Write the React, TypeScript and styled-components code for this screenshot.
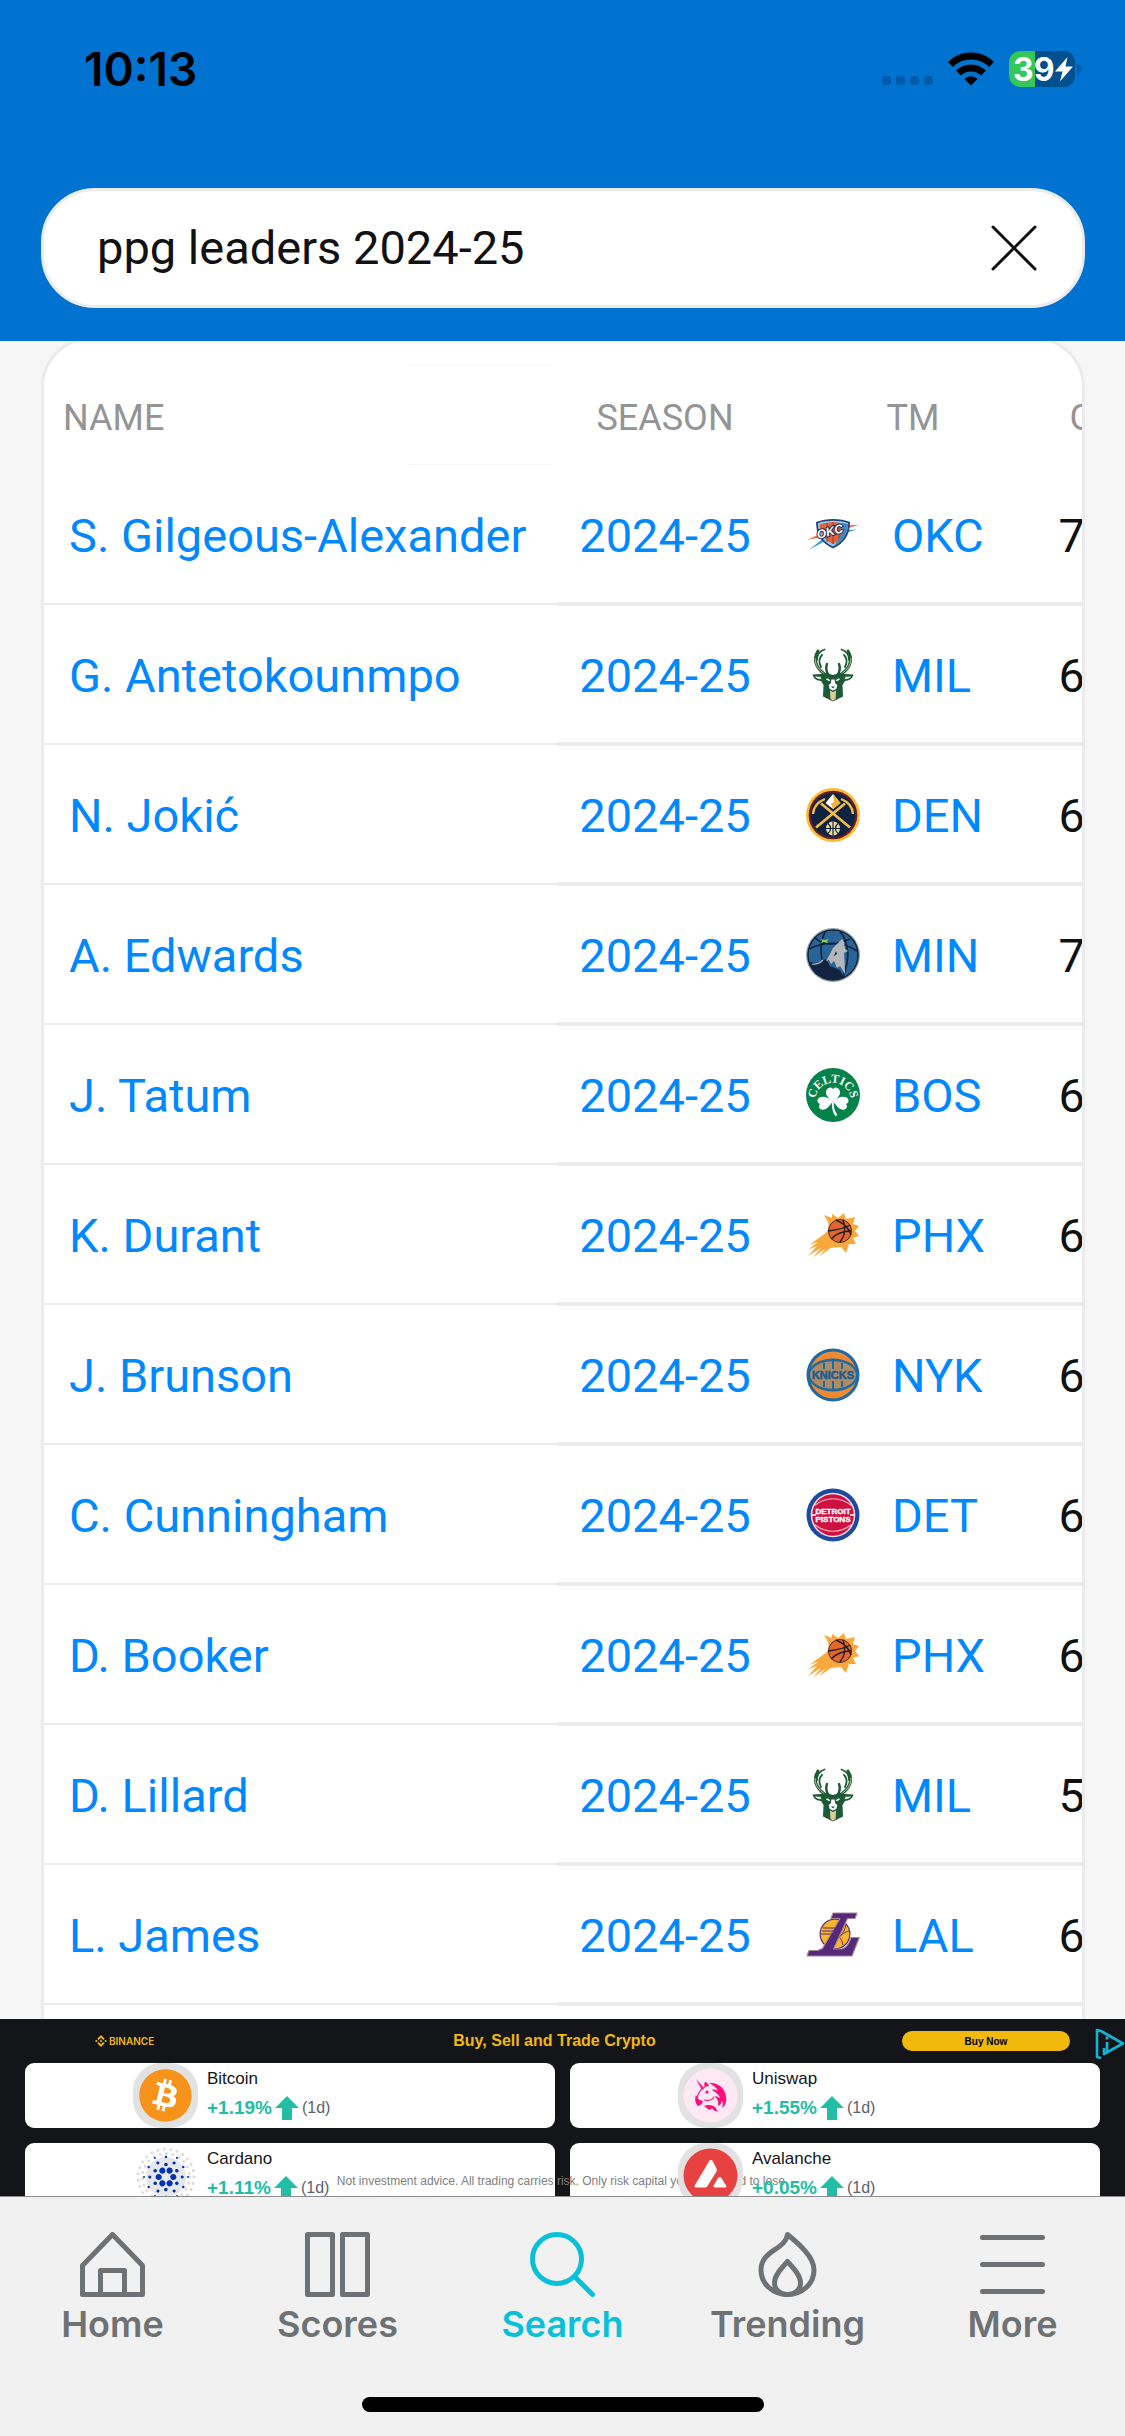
import React from "react";
import styled, { createGlobalStyle } from "styled-components";
import { FaBitcoin } from "react-icons/fa";
import { SiBinance, SiCardano } from "react-icons/si";

const color = {
  brand: "#0073d1",
  link: "#0088ff",
  line: "#ebebeb",
  canvas: "#f6f6f6",
  ink: "#111111",
  muted: "#949494",
  navGrey: "#6e7275",
  navActive: "#08c0d8",
  gold: "#f0b90b",
  up: "#22bda5",
};

const GlobalStyle = createGlobalStyle`
  *, *::before, *::after { box-sizing: border-box; }
  body { margin: 0; background: ${color.canvas}; }
  a { color: inherit; text-decoration: none; }
  button { border: 0; padding: 0; background: none; font: inherit; cursor: pointer; }
  svg { display: block; }
`;

const Screen = styled.div`
  height: 100vh;
  display: flex;
  flex-direction: column;
  overflow: hidden;
  font-family: Roboto, "Liberation Sans", sans-serif;
  color: ${color.ink};
`;

/* ---------- header ---------- */

const Header = styled.header`
  flex: none;
  display: flex;
  flex-direction: column;
  gap: 50px;
  padding-bottom: 33px;
  background: ${color.brand};
`;

const StatusBar = styled.div`
  display: flex;
  align-items: center;
  justify-content: space-between;
  height: 138px;
  padding: 0 43px 0 84px;
  color: #000;
  font-family: Inter, "Liberation Sans", sans-serif;
`;

const Clock = styled.time`
  font-size: 46px;
  font-weight: 600;
`;

const StatusIcons = styled.div`
  display: flex;
  align-items: center;
  gap: 15px;
`;

const SignalDots = styled.div`
  display: flex;
  gap: 5px;
  padding-top: 22px;
`;

const SignalDot = styled.span`
  width: 9px;
  height: 9px;
  border-radius: 3px;
  background: #005ca8;
`;

const SearchForm = styled.form`
  display: flex;
  align-items: center;
  height: 120px;
  margin: 0 40px 0 41px;
  padding: 0 45px 0 53px;
  border: 3px solid #ebebf0;
  border-radius: 54px;
  background: #fff;
`;

const SearchInput = styled.input`
  flex: 1;
  min-width: 0;
  padding: 0;
  border: 0;
  outline: 0;
  background: none;
  color: ${color.ink};
  font: 400 47px/60px Roboto, "Liberation Sans", sans-serif;
`;

/* ---------- results table ---------- */

const Results = styled.main`
  flex: 1;
  min-height: 0;
  display: flex;
  overflow: hidden;
  padding: 0 40px 0 41px;
  background: ${color.canvas};
`;

const Card = styled.section`
  flex: 1;
  min-width: 0;
  margin-top: -4px;
  padding-top: 24px;
  border: 3px solid ${color.line};
  border-bottom: 0;
  border-radius: 50px 50px 0 0;
  background: #fff;
  overflow: hidden;
`;

const StatTable = styled.table`
  width: 1088px;
  table-layout: fixed;
  border-collapse: separate;
  border-spacing: 0;
`;

const Col = styled.col<{ $w: number }>`
  width: ${(p) => p.$w}px;
`;

const HeadCell = styled.th`
  height: 102px;
  padding: 6px 0 0;
  color: ${color.muted};
  font-size: 36px;
  font-weight: 400;
  text-align: center;
`;

const NameHead = styled(HeadCell)`
  padding-left: 19px;
  text-align: left;
  background:
    linear-gradient(#f7f7f7, #f7f7f7) calc(100% - 6px) 0 / 143px 1px no-repeat,
    linear-gradient(#f3f6f8, #f3f6f8) calc(100% - 6px) calc(100% - 1px) / 143px 1px no-repeat;
`;

const Cell = styled.td`
  height: 140px;
  padding: 2px 0 0;
  border-bottom: 4px solid ${color.line};
  font-size: 47px;
  text-align: center;
  white-space: nowrap;
`;

const NumberCell = styled(Cell)`
  padding-right: 16px;
`;

const NameCell = styled.th`
  height: 140px;
  padding: 0 0 2px 25px;
  background: linear-gradient(${color.line}, ${color.line}) 0 calc(100% - 1px) / 100% 2px no-repeat;
  font-size: 47px;
  font-weight: 400;
  text-align: left;
  white-space: nowrap;
`;

const StatLink = styled.a`
  color: ${color.link};
`;

const TeamLink = styled(StatLink)`
  display: flex;
  align-items: center;
  gap: 32px;
  padding-left: 34px;
`;

/* ---------- ad ---------- */

const Ad = styled.aside`
  position: relative;
  flex: none;
  height: 177px;
  padding: 0 25px;
  overflow: hidden;
  background: #141518;
  font-family: "Liberation Sans", Arial, sans-serif;
`;

const AdTop = styled.div`
  display: grid;
  grid-template-columns: 1fr auto 1fr;
  align-items: center;
  height: 44px;
  padding: 0 30px 0 70px;
  color: ${color.gold};
`;

const AdBrand = styled.a`
  display: flex;
  align-items: center;
  gap: 2px;
  font-family: Inter, sans-serif;
  font-size: 10px;
  font-weight: 600;
`;

const AdTitle = styled.strong`
  padding-right: 56px;
  font-size: 16px;
`;

const AdButton = styled.button`
  justify-self: end;
  width: 168px;
  height: 20px;
  border-radius: 10px;
  background: ${color.gold};
  color: #000;
  font-size: 10px;
  font-weight: 700;
`;

const AdChoices = styled.a`
  position: absolute;
  top: 8px;
  right: 0;
`;

const CoinGrid = styled.div`
  display: grid;
  grid-template-columns: 1fr 1fr;
  gap: 15px;
`;

const CoinCard = styled.a`
  display: flex;
  height: 65px;
  padding-left: 108px;
  gap: 9px;
  border-radius: 9px;
  background: #fff;
`;

const CoinBadge = styled.span`
  position: relative;
  z-index: 2;
  width: 65px;
  height: 65px;
`;

const CoinText = styled.span`
  position: relative;
  z-index: 2;
  display: flex;
  flex-direction: column;
  padding-top: 5px;
  gap: 6px;
`;

const CoinName = styled.span`
  color: #14151a;
  font-size: 17px;
  line-height: 22px;
`;

const CoinChange = styled.span`
  display: flex;
  align-items: center;
  gap: 3px;
  color: #5d6168;
  font-size: 16px;
  line-height: 20px;
`;

const Percent = styled.b`
  color: ${color.up};
  font-size: 19px;
`;

const Disclaimer = styled.small`
  position: absolute;
  z-index: 1;
  left: 0;
  right: 0;
  bottom: 7px;
  color: #808080;
  font-size: 12px;
  line-height: 16px;
  text-align: center;
`;

/* ---------- tab bar ---------- */

const TabBar = styled.nav`
  flex: none;
  padding: 35px 0 24px;
  border-top: 1px solid #8c8c8c;
  background: #f1f1f1;
  font-family: Inter, "Liberation Sans", sans-serif;
`;

const Tabs = styled.div`
  display: flex;
`;

const Tab = styled.a<{ $active?: boolean }>`
  flex: 1;
  display: flex;
  flex-direction: column;
  align-items: center;
  gap: 6px;
  color: ${(p) => (p.$active ? color.navActive : color.navGrey)};
  font-size: 36px;
  font-weight: 600;
  line-height: 42px;
`;

const HomeIndicator = styled.div`
  width: 402px;
  height: 15px;
  margin: 52px auto 0;
  border-radius: 8px;
  background: #000;
`;

/* ---------- status icons ---------- */

const Wifi = () => (
  <svg width="46" height="34" viewBox="0 0 46 34" aria-label="Wi-Fi">
    <g fill="none" stroke="#000" strokeWidth="7">
      <path d="M2.5 12.5C14 1.300 32 1.300 43.500 12.500" />
      <path d="M10.500 21C17.500 14.200 28.500 14.200 35.500 21" />
    </g>
    <path d="M23 33.500L16.500 27C20 23.200 26 23.200 29.500 27Z" />
  </svg>
);

const Battery = () => (
  <svg width="73" height="36" viewBox="0 0 73 36" aria-label="Battery 39 percent, charging">
    <clipPath id="cell">
      <rect width="66" height="36" rx="11" />
    </clipPath>
    <g clipPath="url(#cell)">
      <rect width="66" height="36" fill="#00508f" />
      <rect width="26" height="36" fill="#34c759" />
    </g>
    <path d="M68 12.500c3 1 4.500 3 4.500 5.500s-1.500 4.500-4.500 5.500z" fill="#005ca8" />
    <text x="4" y="29.500" fill="#fff" fontFamily="Inter, sans-serif" fontSize="32" fontWeight="700">39</text>
    <path d="M58.500 6L46 20.500h7.500L51 30.500 64 15.500h-7.500z" fill="#fff" />
  </svg>
);

/* ---------- team logos, drawn on a 54 unit square ---------- */

const Logo = ({ label, children }: { label: string; children: React.ReactNode }) => (
  <svg width="54" height="54" viewBox="0 0 54 54" role="img" aria-label={label}>
    {children}
  </svg>
);

const Thunder = () => (
  <Logo label="Thunder logo">
    <path d="M1 32L16 25v4z" fill="#ef6a55" />
    <path d="M3 42L20 28l1 4z" fill="#3d9fdc" />
    <path d="M38 17.500l15-.800-13 4z" fill="#ef6a55" />
    <path d="M38 22l13-.500-13 4z" fill="#3d9fdc" />
    <path d="M10 14C21 10 34 10 44 14c0 12-5 21-17 26.500C15 35 10 26 10 14z" fill="#27426f" />
    <path d="M11.800 15.200C21 12 33 12 42.200 15.200c-.2 10-5 18.500-15.200 23.300C17 34 12 26 11.800 15.200z" fill="#8ecdf0" />
    <path d="M13.500 16.500C22 13.700 31 13.700 39 16.200c-.5 9-4 15.500-12 20-8-4-13-10-13.500-19.700z" fill="#e2633a" />
    <path d="M21 15v19M27 14v22M33 15v17" stroke="#8c3b2b" strokeWidth=".8" />
    <path d="M36 15l6 1c-.4 9-4.500 17-14 21.500 6-6 9-14 8-22.500z" fill="#3d86c6" />
    <text x="12" y="31" transform="rotate(-15 12 31)" fill="#fff" stroke="#1c2e5c" strokeWidth="2" paintOrder="stroke" fontFamily="Liberation Sans, sans-serif" fontSize="12" fontStyle="italic" fontWeight="700">OKC</text>
  </Logo>
);

const Bucks = () => (
  <Logo label="Bucks logo">
    <g fill="none" stroke="#1d5b38" strokeLinecap="round">
      <path d="M22 28C12 23 5.500 13 12 3" strokeWidth="3" />
      <path d="M32 28C42 23 48.500 13 42 3" strokeWidth="3" />
      <path d="M11 12c0-5 3-9 7.500-10.500M15 19c-3-6-1-10 1-12" strokeWidth="1.800" />
      <path d="M43 12c0-5-3-9-7.500-10.500M39 19c3-6 1-10-1-12" strokeWidth="1.800" />
      <path d="M22.500 27c-2-3-3-7-1.500-11M31.500 27c2-3 3-7 1.500-11" strokeWidth="2.400" />
    </g>
    <path d="M9 10c0 7 4 12 9.500 16M45 10c0 7-4 12-9.500 16" fill="none" stroke="#e6d9ad" strokeWidth=".8" />
    <path d="M6.500 26.500l8.500-.5 5-1 7 2 7-2 5 1 8.500.5c-1 4.500-4.500 6-8.500 6.500l-2.500 4 .5 11.500-10 5-10-5 .5-11.500L15 33c-4-.5-7.500-2-8.500-6.500z" fill="#1d5b38" />
    <path d="M9 28.500l5.500.2 1 2.500c-3 0-5.500-.8-6.500-2.700zM45 28.500l-5.500.2-1 2.500c3 0 5.500-.8 6.500-2.700z" fill="#f0ead6" />
    <path d="M20.500 31l3.500 1.600M33.500 31L30 32.600" stroke="#fff" strokeWidth="1.400" />
    <path d="M25.500 31.500h3l.8 4 2 1.500-1 4-3.300 1.500-3.300-1.500-1-4 2-1.500z" fill="#fff" />
    <path d="M25 38.500h4l-2 2z" fill="#1d5b38" />
    <path d="M24 42.500l3 1.500 3-1.500-.3 8L27 53l-2.700-2.500z" fill="#dfc9a0" />
  </Logo>
);

const Nuggets = () => (
  <Logo label="Nuggets logo">
    <circle cx="27" cy="27" r="27" fill="#fdb930" />
    <circle cx="27" cy="27" r="24.300" fill="#5d1f2c" />
    <circle cx="27" cy="27" r="22" fill="#0d2340" />
    <g fill="none" stroke="#f6bc45">
      <path d="M10 40L39 15.500M44 40L15 15.500" stroke="#0d2340" strokeWidth="5" />
      <path d="M10 39.500L39 15.500M44 39.500L15 15.500" strokeWidth="2.600" />
      <path d="M7 26c.5-7 4-12 12-15M47 26c-.5-7-4-12-12-15" strokeWidth="2.400" />
    </g>
    <path d="M19.500 15L27 6l7.500 9L27 21z" fill="#fff" />
    <path d="M27 6l7.500 9L27 21l-2-5 3-2z" fill="#f3b233" />
    <circle cx="27" cy="40.500" r="7" fill="#f5d998" />
    <path d="M27 33.500v14M20 40.500h14M22 35.500c3.500 3 3.500 7 0 10M32 35.500c-3.500 3-3.500 7 0 10" fill="none" stroke="#0d2340" strokeWidth="1.200" />
  </Logo>
);

const Wolves = () => (
  <Logo label="Timberwolves logo">
    <clipPath id="wolfBall">
      <circle cx="27" cy="27" r="24.500" />
    </clipPath>
    <circle cx="27" cy="27" r="27" fill="#98a1a8" />
    <circle cx="27" cy="27" r="25.800" fill="#12233f" />
    <g clipPath="url(#wolfBall)">
      <circle cx="27" cy="27" r="24.500" fill="#2a6496" />
      <path d="M3 21c16-8 34-8 48 2M19 4c-5 10-5 24 0 38M34 3c9 12 10 28 3 46M8 9c8 8 18 10 36 2" fill="none" stroke="#12233f" strokeWidth="1.700" />
      <path d="M0 33l10 2 10-4 4 7 10 4 6 12H0z" fill="#12233f" />
    </g>
    <path d="M36 11l2 3 1 7 3 2-4 2 .5 8L39 46l-5-8-3 2-3-7-3 3-2-4-3 1 4-7 3-6z" fill="#b4b7ba" />
    <path d="M30 23l-2 5 3-2z" fill="#12233f" />
    <path d="M15 11l4 1 4-1-2 2 1 2-4-1-3 1 1-2z" fill="#8fd04a" />
    <path d="M6 36c5 1 8-1 11-4" fill="none" stroke="#a9b8c6" strokeWidth="1.200" />
  </Logo>
);

const Celtics = () => (
  <Logo label="Celtics logo">
    <path id="celticsArc" d="M10 28A17.500 17.500 0 0 1 44 28" fill="none" />
    <circle cx="27" cy="27" r="27" fill="#05824a" />
    <text fill="#fff" fontFamily="Liberation Serif, serif" fontSize="12" fontWeight="700" textAnchor="middle">
      <textPath href="#celticsArc" startOffset="50%">CELTICS</textPath>
    </text>
    <g fill="#fff">
      <path d="M27 34c-5-4-8.500-8-6.500-12 1.500-3 5-3.500 6.500-1 1.500-2.500 5-2 6.500 1 2 4-1.500 8-6.500 12z" />
      <path d="M27 33c-4 6-7 9.500-11.500 8.500-3-.8-3-4-1.500-5.500-3-1-3.500-5-.5-6.500C18 27.500 22 29.500 27 33z" />
      <path d="M27 33c4 6 7 9.500 11.500 8.500 3-.8 3-4 1.500-5.500 3-1 3.500-5 .5-6.500C36 27.500 32 29.500 27 33z" />
      <path d="M26 34h1.800c-.3 5 .7 9 3.700 13l-2 1.300C26.500 44 25.500 39 26 34z" />
    </g>
  </Logo>
);

const Suns = () => (
  <Logo label="Suns logo">
    <path d="M21 24L4 36.500l8-2.500L2 41.500l9-3.500L2 48l13-8-8 9.500L20 40l-7 8.500L30 36z" fill="#f9a93b" />
    <path d="M26 6l6 4 6-5 2 6 9-2-2 7 6 2-4 5 4 5-6 2 3 6-7 0-3 9-5-6-12 1-4-13 4-7-1-6-4-7 8 3z" fill="#f9a93b" />
    <circle cx="34" cy="23" r="11.800" fill="#e2672e" />
    <g fill="none" stroke="#231b1f" strokeWidth="1.400">
      <path d="M22.300 23c8-1 17-3 22-6M30 12c7 3 13 8 15 15M25 31c5-5 12-8 20-8M37 12c3 8 2 16-3 22" />
      <circle cx="34" cy="23" r="11.500" strokeWidth=".8" />
    </g>
  </Logo>
);

const Knicks = () => (
  <Logo label="Knicks logo">
    <circle cx="27" cy="27" r="26.500" fill="#1f6aa3" />
    <circle cx="27" cy="27" r="23.500" fill="#f08a32" />
    <ellipse cx="27" cy="27" rx="25" ry="16.500" fill="#1f6aa3" />
    <ellipse cx="27" cy="27" rx="23" ry="13.800" fill="#b08b62" />
    <path d="M27 13v8M18 15v6M36 15v6M27 33v8M18 33v6M36 33v6" stroke="#1f6aa3" strokeWidth="2" />
    <text x="27" y="31" fill="#1b5c93" stroke="#1b5c93" strokeWidth=".5" fontFamily="Liberation Sans, sans-serif" fontSize="11" fontWeight="700" textAnchor="middle">KNICKS</text>
  </Logo>
);

const Pistons = () => (
  <Logo label="Pistons logo">
    <circle cx="27" cy="27" r="26.500" fill="#1d4aa0" />
    <circle cx="27" cy="27" r="22.300" fill="#f1dbe5" />
    <circle cx="27" cy="27" r="20.800" fill="#cf1141" />
    <path d="M8.500 17.500C20 8.500 34 8.500 45.500 17.500M8.500 36.500C20 45.500 34 45.500 45.500 36.500" fill="none" stroke="#f6b4c6" strokeWidth="1.200" />
    <path d="M6 27h4M44 27h4" stroke="#fff" strokeWidth="1.500" />
    <g fill="#fff" stroke="#fff" strokeWidth=".4" fontFamily="Liberation Sans, sans-serif" fontSize="8" fontWeight="700" textAnchor="middle">
      <text x="27" y="25.500">DETROIT</text>
      <text x="27" y="34">PISTONS</text>
    </g>
  </Logo>
);

const Lakers = () => (
  <Logo label="Lakers logo">
    <circle cx="29" cy="26" r="15.500" fill="#5b2d7e" />
    <circle cx="29" cy="26" r="14.300" fill="#f8b62d" />
    <path d="M32 30c4-4 7-6 11-7M37 37c-1-6-4-9-8-11M40 16c-1 6-3 10-8 14" fill="none" stroke="#6b3a5a" strokeWidth="1" />
    <path d="M27 5h24l-2 5.500h-7.500L27.500 41H36c4-1 7-5 9-11.500h8.300L46 48H1l2-5.500h8.500l5-2L34 10.500h-9z" fill="#54297a" stroke="#a98496" strokeWidth="1.200" strokeLinejoin="round" />
    <path d="M17 20h12M16 23h11M15 26h11" stroke="#54297a" strokeWidth="1.200" />
  </Logo>
);

/* ---------- coin badges, drawn on a 65 unit square ---------- */

const Halo = () => <rect width="65" height="65" rx="28" fill="#e2e2e2" />;

const BitcoinBadge = () => (
  <svg width="65" height="65" viewBox="0 0 65 65">
    <Halo />
    <circle cx="32.500" cy="32.500" r="24" fill="#fff" />
    <FaBitcoin x="5.500" y="5.500" size={54} color="#f7931a" />
  </svg>
);

const UniswapBadge = () => (
  <svg width="65" height="65" viewBox="0 0 65 65">
    <Halo />
    <circle cx="32.500" cy="32.500" r="27" fill="#fde8f4" />
    <g fill="#ff0d7c">
      <path d="M18 16l8 9-2 2z" />
      <path d="M27 19c2 0 3 2 4 4l-4 1c-1-2-1-4 0-5z" />
      <path d="M31 20c10-1 16 6 17 13 1 6-1 10-4 12 1-3 1-5 0-7-1 3-2 4-4 5 1-5-1-8-4-10 3 0 4 1 6 2-1-4-5-6-8-8 2-1 4 0 6 1-2-4-5-6-9-8z" />
      <path d="M18 32c2 4 3 5 7 6-1 3-2 4-5 5-2-2-4-6-2-11z" />
      <path d="M26 43c4-2 9-1 11 1 2 2 1 4 4 4-4 1-6-1-7-3-1 2-3 2-4 1z" />
    </g>
    <path d="M27 24c-6 3-8 8-8 14M26 37c4 1 8 0 10-3" fill="none" stroke="#ff0d7c" strokeWidth="1.200" />
    <circle cx="29" cy="29" r="1.600" fill="#ff0d7c" />
  </svg>
);

const CardanoBadge = () => (
  <svg width="65" height="65" viewBox="0 0 65 65">
    <g fill="none" stroke="#dcdce0" strokeWidth="3" strokeLinecap="round" strokeDasharray="0 6.500">
      <circle cx="33" cy="34" r="28" />
      <circle cx="33" cy="34" r="23.500" />
    </g>
    <circle cx="33" cy="34" r="20" fill="#e6e7ee" />
    <SiCardano x="10" y="11" size={46} color="#0033ad" />
  </svg>
);

const AvalancheBadge = () => (
  <svg width="65" height="65" viewBox="0 0 65 65">
    <Halo />
    <circle cx="32.500" cy="32.500" r="27" fill="#e84142" />
    <path d="M31 18.500c1-2 3-2 4 0l3.500 7c.5 1 .5 2 0 3L29.500 43c-.8 1-1.500 1.500-3 1.500H18c-1.500 0-2-1-1-2.500zM40 35c1-1.500 2.500-1.500 3.500 0l4.500 7.500c.8 1.300.3 2-1 2H37c-1.500 0-2-1-1-2.500z" fill="#fff" />
  </svg>
);

const UpArrow = () => (
  <svg width="24" height="24" viewBox="0 0 24 24" aria-label="up">
    <path d="M12 0l12 12h-7v12H7V12H0z" fill={color.up} />
  </svg>
);

/* ---------- tab icons, drawn on a 65 unit square ---------- */

const TabIcon = ({ children }: { children: React.ReactNode }) => (
  <svg width="65" height="65" viewBox="0 0 65 65" fill="none" stroke="currentColor" strokeWidth="5" strokeLinejoin="round" strokeLinecap="round" aria-hidden="true">
    {children}
  </svg>
);

const tabs = [
  { label: "Home", icon: <path d="M2.500 62.500v-29l30-31 30 31v29zM20.500 62.500v-24h24v24" /> },
  { label: "Scores", icon: <path d="M2.500 2.500h25v60h-25zM37.500 2.500h25v60h-25z" /> },
  {
    label: "Search",
    icon: (
      <>
        <circle cx="27" cy="27" r="24.500" />
        <path d="M45 45l17.500 17.500" />
      </>
    ),
    active: true,
  },
  {
    label: "Trending",
    icon: (
      <>
        <path d="M32.500 2.500c11 9 26.500 22 26.500 35.500 0 14-12 24.500-26.500 24.500S6 52 6 38C6 18 30.500 18 32.500 2.500z" />
        <path d="M32.500 29.500c6 6.500 13 14 13 21.500 0 7-6 11.500-13 11.500S19.500 58 19.500 51c0-7.500 7-15 13-21.500z" />
      </>
    ),
  },
  { label: "More", icon: <path d="M2.500 5.500h60M2.500 32.500h60M2.500 59.500h60" /> },
];

/* ---------- data ---------- */

const logos: Record<string, () => React.ReactElement> = {
  OKC: Thunder,
  MIL: Bucks,
  DEN: Nuggets,
  MIN: Wolves,
  BOS: Celtics,
  PHX: Suns,
  NYK: Knicks,
  DET: Pistons,
  LAL: Lakers,
};

const players = [
  { name: "S. Gilgeous-Alexander", team: "OKC", games: 70 },
  { name: "G. Antetokounmpo", team: "MIL", games: 61 },
  { name: "N. Jokić", team: "DEN", games: 63 },
  { name: "A. Edwards", team: "MIN", games: 72 },
  { name: "J. Tatum", team: "BOS", games: 66 },
  { name: "K. Durant", team: "PHX", games: 60 },
  { name: "J. Brunson", team: "NYK", games: 61 },
  { name: "C. Cunningham", team: "DET", games: 66 },
  { name: "D. Booker", team: "PHX", games: 68 },
  { name: "D. Lillard", team: "MIL", games: 58 },
  { name: "L. James", team: "LAL", games: 62 },
];

const coins = [
  { name: "Bitcoin", change: "+1.19%", badge: <BitcoinBadge /> },
  { name: "Uniswap", change: "+1.55%", badge: <UniswapBadge /> },
  { name: "Cardano", change: "+1.11%", badge: <CardanoBadge /> },
  { name: "Avalanche", change: "+0.05%", badge: <AvalancheBadge /> },
];

export default function App() {
  return (
    <Screen>
      <GlobalStyle />
      <Header>
        <StatusBar>
          <Clock>10:13</Clock>
          <StatusIcons>
            <SignalDots>
              <SignalDot />
              <SignalDot />
              <SignalDot />
              <SignalDot />
            </SignalDots>
            <Wifi />
            <Battery />
          </StatusIcons>
        </StatusBar>
        <SearchForm role="search" onSubmit={(e) => e.preventDefault()}>
          <SearchInput aria-label="Search" defaultValue="ppg leaders 2024-25" />
          <button type="reset" aria-label="Clear search">
            <svg width="46" height="46" viewBox="0 0 46 46" stroke="#111" strokeWidth="3" strokeLinecap="round">
              <path d="M2 2l42 42M44 2L2 44" />
            </svg>
          </button>
        </SearchForm>
      </Header>

      <Results>
        <Card>
          <StatTable>
            <colgroup>
              <Col $w={514} />
              <Col $w={214} />
              <Col $w={282} />
              <Col $w={78} />
            </colgroup>
            <thead>
              <tr>
                <NameHead scope="col">NAME</NameHead>
                <HeadCell scope="col">SEASON</HeadCell>
                <HeadCell scope="col">TM</HeadCell>
                <HeadCell scope="col">GP</HeadCell>
              </tr>
            </thead>
            <tbody>
              {players.map((p) => {
                const TeamLogo = logos[p.team];
                return (
                  <tr key={p.name}>
                    <NameCell scope="row">
                      <StatLink href="#player">{p.name}</StatLink>
                    </NameCell>
                    <Cell>
                      <StatLink href="#season">2024-25</StatLink>
                    </Cell>
                    <Cell>
                      <TeamLink href="#team">
                        <TeamLogo />
                        {p.team}
                      </TeamLink>
                    </Cell>
                    <NumberCell>{p.games}</NumberCell>
                  </tr>
                );
              })}
            </tbody>
          </StatTable>
        </Card>
      </Results>

      <Ad>
        <AdTop>
          <AdBrand href="#ad">
            <SiBinance size={12} />
            BINANCE
          </AdBrand>
          <AdTitle>Buy, Sell and Trade Crypto</AdTitle>
          <AdButton type="button">Buy Now</AdButton>
        </AdTop>
        <AdChoices href="#adchoices" aria-label="AdChoices">
          <svg width="30" height="33" viewBox="0 0 30 33" fill="none" stroke="#16b4d2" strokeLinejoin="round">
            <path d="M6 31L2 30V3l4 1 22 12.500L9 27v-6" strokeWidth="2.600" />
            <path d="M12 15v9" strokeWidth="2.600" />
            <path d="M12 9.500v3" strokeWidth="2.600" />
          </svg>
        </AdChoices>
        <CoinGrid>
          {coins.map((c) => (
            <CoinCard key={c.name} href="#coin">
              <CoinBadge>{c.badge}</CoinBadge>
              <CoinText>
                <CoinName>{c.name}</CoinName>
                <CoinChange>
                  <Percent>{c.change}</Percent>
                  <UpArrow />
                  (1d)
                </CoinChange>
              </CoinText>
            </CoinCard>
          ))}
        </CoinGrid>
        <Disclaimer>
          Not investment advice. All trading carries risk. Only risk capital you can afford to lose.
        </Disclaimer>
      </Ad>

      <TabBar>
        <Tabs>
          {tabs.map((t) => (
            <Tab key={t.label} href={`#${t.label.toLowerCase()}`} $active={t.active}>
              <TabIcon>{t.icon}</TabIcon>
              {t.label}
            </Tab>
          ))}
        </Tabs>
        <HomeIndicator />
      </TabBar>
    </Screen>
  );
}
